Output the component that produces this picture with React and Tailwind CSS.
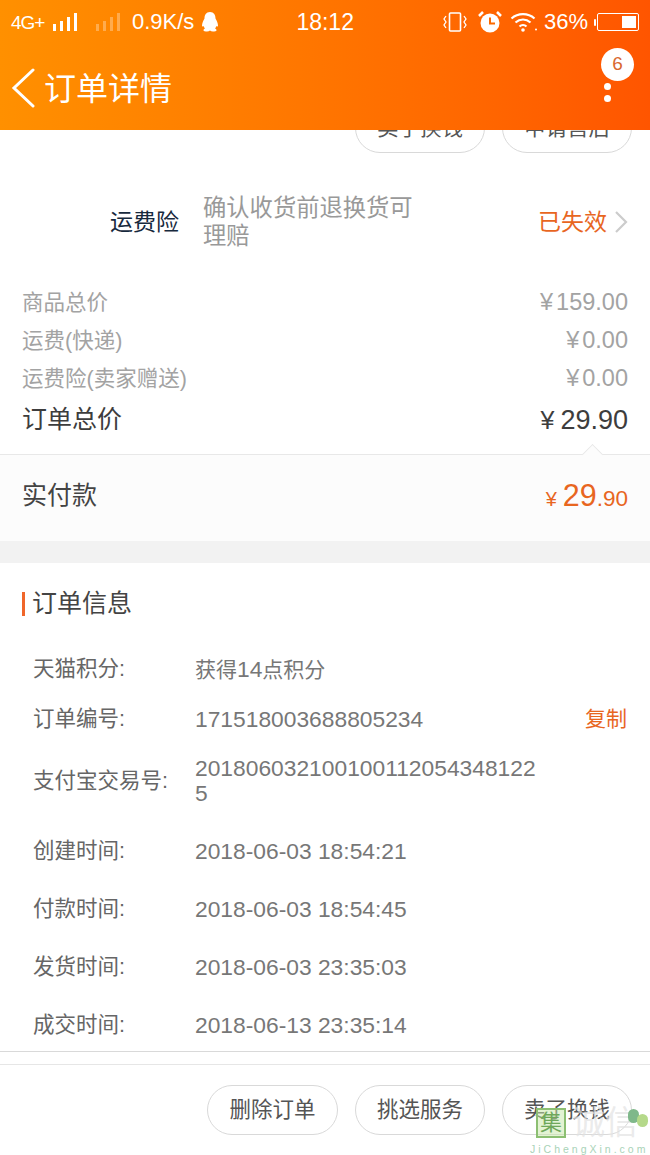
import React from 'react';

const font = 'font-["Liberation_Sans","Noto_Sans_CJK_SC",sans-serif]';

const SignalBars = ({ className }) => (
  <div className={`flex items-end gap-[4px] h-[18px] ${className}`}>
    <div className="w-[3px] h-[7px] bg-white" />
    <div className="w-[3px] h-[10px] bg-white" />
    <div className="w-[3px] h-[14px] bg-white" />
    <div className="w-[3px] h-[18px] bg-white" />
  </div>
);

const StatusBar = () => (
  <div className="h-[44px] flex items-center pl-[11px] text-white">
    <span className="text-[19px] tracking-[-1px] w-[42px] leading-none">4G+</span>
    <SignalBars className="opacity-100" />
    <SignalBars className="opacity-30 ml-[19px]" />
    <span className="ml-[12px] text-[22px] leading-none">0.9K/s</span>
    <svg width="18" height="20" viewBox="0 0 18 20" className="ml-[7px]" fill="#fff">
      <path d="M9 0c4 0 5.500 3 5.500 6.500 1 2 2.500 4.500 2.500 7 0 1-.5 1.500-1.500 .5-.3 1 -.8 1.700-1.500 2.500 1 .4 1.500 1 1.500 1.700 0 1-2 1.300-3.500 1.300-1.300 0-2.300-.4-3-1-.7.600-1.700 1-3 1-1.500 0-3.500-.3-3.500-1.300 0-.7.500-1.300 1.500-1.700-.7-.8-1.200-1.500-1.500-2.500-1 1-1.500.5-1.500-.5 0-2.500 1.500-5 2.500-7C3.500 3 5 0 9 0z" />
    </svg>
    <span className="ml-[77px] text-[23px] leading-none">18:12</span>
    <svg width="24" height="22" viewBox="0 0 24 22" className="ml-[89px]" fill="none" stroke="#fff" strokeWidth="1.600">
      <rect x="6.500" y="2" width="11" height="18" rx="1" />
      <path d="M3 5 1 8l2 3-2 3 2 3M21 5l2 3-2 3 2 3-2 3" strokeWidth="1.300" />
    </svg>
    <svg width="24" height="24" viewBox="0 0 24 24" className="ml-[11px]">
      <circle cx="12" cy="13" r="9.500" fill="#fff" />
      <path d="M12 7.500V13.500H17" fill="none" stroke="#fb6a00" strokeWidth="2" />
      <path d="M1 6 5 2M23 6 19 2" stroke="#fff" strokeWidth="2.500" />
    </svg>
    <svg width="28" height="20" viewBox="0 0 28 20" className="ml-[8px]" fill="none" stroke="#fff" strokeWidth="2.200">
      <path d="M1.500 6.500C8 .7 18 .7 24.500 6.500M5.500 10.500c4.500-4 10.500-4 15 0M9.500 14.500c2-1.800 5-1.800 7 0" />
      <circle cx="13" cy="18" r="1.800" fill="#fff" stroke="none" />
      <circle cx="26" cy="17.500" r="1" fill="#fff" stroke="none" />
    </svg>
    <span className="ml-[6px] text-[22px] leading-none">36%</span>
    <div className="ml-[9px] relative w-[42px] h-[18px] rounded-[2px] border border-white flex justify-end p-[2px]">
      <div className="w-[14px] bg-white" />
      <div className="absolute left-[-4px] top-[5px] w-[2px] h-[7px] bg-white rounded-[1px]" />
    </div>
  </div>
);

const Pill = ({ children, w = 'w-[131px]' }) => (
  <div className={`${w} h-[50px] rounded-full border border-[#d9d9d9] bg-white flex items-center justify-center text-[21.5px] text-[#555555]`}>
    {children}
  </div>
);

const PriceRow = ({ label, value }) => (
  <div className="h-[38px] flex items-center justify-between text-[#a3a3a3]">
    <span className="text-[21.5px]">{label}</span>
    <span className="text-[23.5px]">
      <span className="mr-[3px]">¥</span>
      {value}
    </span>
  </div>
);

const InfoRow = ({ label, children, action, h = 'h-[58px]' }) => (
  <div className={`${h} flex items-center pl-[33px] pr-[23px]`}>
    <span className="w-[162px] shrink-0 text-[21.5px] text-[#666666]">{label}</span>
    <div className="flex-1 text-[22.8px] text-[#777777] leading-[25px] break-all">{children}</div>
    {action && <span className="text-[21px] text-[#e8661f]">{action}</span>}
  </div>
);

export default function App() {
  return (
    <div className={`relative w-[650px] h-[1155px] overflow-hidden bg-white flex flex-col ${font}`}>
      <div className="relative z-10 h-[130px] shrink-0 bg-gradient-to-r from-[#ff9000] to-[#ff5500] text-white">
        <StatusBar />
        <div className="h-[86px] flex items-center relative">
          <svg width="24" height="40" viewBox="0 0 24 40" className="ml-[11px] mt-[1px]" fill="none" stroke="#fff" strokeWidth="3" strokeLinecap="round">
            <path d="M22 2 3 20l19 18" />
          </svg>
          <span className="text-[32px] ml-[9px] mt-[3px]">订单详情</span>
          <div className="absolute left-[601px] top-[4px] w-[33px] h-[33px] rounded-full bg-white flex items-center justify-center text-[19px] text-[#d9682f]">
            6
          </div>
          <div className="absolute left-[604px] top-[39px] flex flex-col gap-[5px]">
            <div className="w-[7px] h-[7px] rounded-full bg-white" />
            <div className="w-[7px] h-[7px] rounded-full bg-white" />
          </div>
        </div>
      </div>

      <div className="flex-1 flex flex-col min-h-0">
        <div className="flex justify-end gap-[17px] pr-[18px] -mt-[27px]">
          <Pill w="w-[130px]">卖了换钱</Pill>
          <Pill w="w-[130px]">申请售后</Pill>
        </div>

        <div className="h-[138px] flex items-center">
          <span className="ml-[110px] w-[93px] text-[23px] text-[#17293d]">运费险</span>
          <p className="w-[225px] text-[23.3px] leading-[28px] text-[#999999]">确认收货前退换货可理赔</p>
          <span className="ml-[110px] text-[23px] text-[#e8661f]">已失效</span>
          <svg width="14" height="24" viewBox="0 0 14 24" className="ml-[7px]" fill="none" stroke="#cccccc" strokeWidth="2.200">
            <path d="M2 2l10 10L2 22" />
          </svg>
        </div>

        <div className="px-[22px] mt-[-7px]">
          <PriceRow label="商品总价" value="159.00" />
          <PriceRow label="运费(快递)" value="0.00" />
          <PriceRow label="运费险(卖家赠送)" value="0.00" />
          <div className="h-[44px] flex items-center justify-between text-[#3d3d3d]">
            <span className="text-[25px]">订单总价</span>
            <span className="text-[27px]">
              <span className="text-[25px] mr-[6px]">¥</span>
              29.90
            </span>
          </div>
        </div>

        <div className="relative mt-[12px] h-[87px] border-t border-[#e8e8e8] bg-[#fcfcfc] flex items-center justify-between pl-[22px] pr-[22px] pb-[4px]">
          <div className="absolute right-[50px] top-[-8px] w-[15px] h-[15px] rotate-45 bg-[#fcfcfc] border-l border-t border-[#e8e8e8]" />
          <span className="text-[25px] text-[#444444]">实付款</span>
          <span className="text-[#e8661f] flex items-baseline">
            <span className="text-[20px] mr-[6px]">¥</span>
            <span className="text-[30.5px]">29</span>
            <span className="text-[22.5px]">.90</span>
          </span>
        </div>

        <div className="h-[22px] shrink-0 bg-[#f2f2f2]" />

        <div className="h-[81px] flex items-center pl-[22px]">
          <div className="w-[3px] h-[24px] bg-[#f0662a]" />
          <span className="ml-[7px] text-[25px] text-[#444444]">订单信息</span>
        </div>

        <InfoRow label="天猫积分:" h="h-[50px]">
          <span className="text-[21px]">获得</span>14<span className="text-[21px]">点积分</span>
        </InfoRow>
        <InfoRow label="订单编号:" h="h-[50px]" action="复制">171518003688805234</InfoRow>
        <InfoRow label="支付宝交易号:" h="h-[74px]">
          <div className="w-[342px]">2018060321001001120543481225</div>
        </InfoRow>
        <InfoRow label="创建时间:" h="h-[58px] mt-[4px]">2018-06-03 18:54:21</InfoRow>
        <InfoRow label="付款时间:">2018-06-03 18:54:45</InfoRow>
        <InfoRow label="发货时间:">2018-06-03 23:35:03</InfoRow>
        <InfoRow label="成交时间:">2018-06-13 23:35:14</InfoRow>

        <div className="mt-[-3px] h-[13px] border-t border-[#d9d9d9]" />
        <div className="flex-1 border-t border-[#e6e6e6] flex justify-end gap-[17px] pr-[18px] pt-[20px]">
          <Pill>删除订单</Pill>
          <Pill w="w-[130px]">挑选服务</Pill>
          <Pill w="w-[130px]">卖了换钱</Pill>
        </div>
      </div>

      {/* site watermark */}
      <div className="absolute left-[530px] top-[1105px] z-20 w-[120px] h-[50px]">
        <div className="absolute left-[6px] top-[3px] w-[30px] h-[30px] border-2 border-[#8cbf72] bg-[#c7e8a8]/50 flex items-center justify-center text-[22px] leading-none text-[#6fa85a]">
          集
        </div>
        <span className="absolute left-[42px] top-[0px] text-[33px] leading-[36px] text-[#e2e2e2]/70 whitespace-nowrap">诚信</span>
        <div className="absolute left-[98px] top-[4px] w-[11px] h-[14px] rounded-full bg-[#7fb88a]" />
        <div className="absolute left-[107px] top-[9px] w-[11px] h-[13px] rounded-full bg-[#b5d98a]" />
        <span className="absolute left-[0px] top-[37px] text-[10.5px] leading-[14px] tracking-[3px] text-[#a9d3b8] whitespace-nowrap">JiChengXin.com</span>
      </div>
    </div>
  );
}
